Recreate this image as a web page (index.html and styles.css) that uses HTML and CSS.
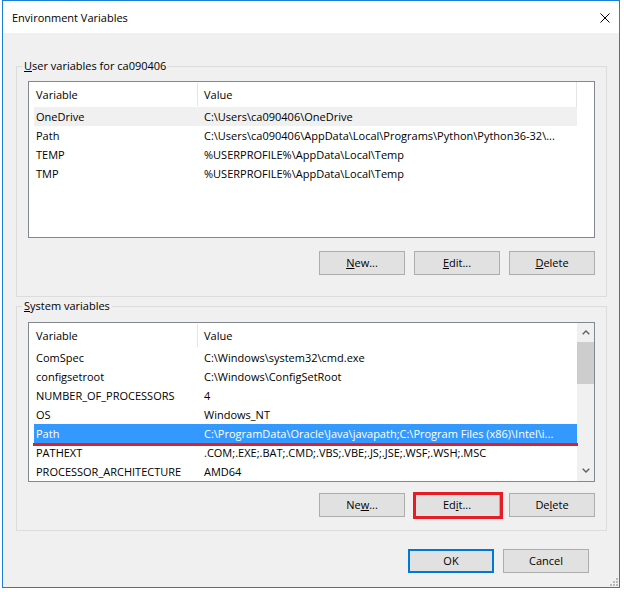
FILE: index.html
```html
<!DOCTYPE html>
<html>
<head>
<meta charset="utf-8">
<title>Environment Variables</title>
<link rel="stylesheet" href="styles.css">
</head>
<body>
<div class="window">
  <div class="titlebar">
    <span class="title">Environment Variables</span>
    <span class="close">
      <svg width="10" height="10" viewBox="0 0 10 10"><path d="M0.5 0.5 L9.5 9.5 M9.5 0.5 L0.5 9.5" stroke="#000" stroke-width="1" fill="none"/></svg>
    </span>
  </div>
  <div class="body">
    <fieldset class="group group-user">
      <legend><u>U</u>ser variables for ca090406</legend>
      <div class="list list-user">
        <div class="list-main">
          <div class="hdr"><div class="c1">Variable</div><div class="c2">Value</div></div>
          <div class="row row-inactive"><div class="c1">OneDrive</div><div class="c2">C:\Users\ca090406\OneDrive</div></div>
          <div class="row"><div class="c1">Path</div><div class="c2">C:\Users\ca090406\AppData\Local\Programs\Python\Python36-32\...</div></div>
          <div class="row"><div class="c1">TEMP</div><div class="c2">%USERPROFILE%\AppData\Local\Temp</div></div>
          <div class="row"><div class="c1">TMP</div><div class="c2">%USERPROFILE%\AppData\Local\Temp</div></div>
        </div>
        <div class="scroll-space"></div>
      </div>
      <div class="btns btns-user">
        <button class="btn"><u>N</u>ew...</button>
        <button class="btn"><u>E</u>dit...</button>
        <button class="btn"><u>D</u>elete</button>
      </div>
    </fieldset>
    <fieldset class="group group-sys">
      <legend><u>S</u>ystem variables</legend>
      <div class="list list-sys">
        <div class="list-main">
          <div class="hdr"><div class="c1">Variable</div><div class="c2">Value</div></div>
          <div class="row"><div class="c1">ComSpec</div><div class="c2">C:\Windows\system32\cmd.exe</div></div>
          <div class="row"><div class="c1">configsetroot</div><div class="c2">C:\Windows\ConfigSetRoot</div></div>
          <div class="row"><div class="c1">NUMBER_OF_PROCESSORS</div><div class="c2">4</div></div>
          <div class="row"><div class="c1">OS</div><div class="c2">Windows_NT</div></div>
          <div class="row row-selected"><div class="c1">Path</div><div class="c2">C:\ProgramData\Oracle\Java\javapath;C:\Program Files (x86)\Intel\i...</div><span class="red-underline"></span></div>
          <div class="row"><div class="c1">PATHEXT</div><div class="c2">.COM;.EXE;.BAT;.CMD;.VBS;.VBE;.JS;.JSE;.WSF;.WSH;.MSC</div></div>
          <div class="row"><div class="c1">PROCESSOR_ARCHITECTURE</div><div class="c2">AMD64</div></div>
        </div>
        <div class="vscroll">
          <div class="arrow arrow-up"><svg width="8" height="5" viewBox="0 0 8 5"><path d="M0.7 4.3 L4 1 L7.3 4.3" stroke="#606060" stroke-width="1.4" fill="none"/></svg></div>
          <div class="thumb"></div>
          <div class="track"></div>
          <div class="arrow arrow-down"><svg width="8" height="5" viewBox="0 0 8 5"><path d="M0.7 0.7 L4 4 L7.3 0.7" stroke="#606060" stroke-width="1.4" fill="none"/></svg></div>
        </div>
      </div>
      <div class="btns btns-sys">
        <button class="btn">Ne<u>w</u>...</button>
        <button class="btn btn-marked">Ed<u>i</u>t...<span class="red-box"></span></button>
        <button class="btn">De<u>l</u>ete</button>
      </div>
    </fieldset>
    <div class="dlg-btns">
      <button class="btn btn-default">OK</button>
      <button class="btn">Cancel</button>
    </div>
  </div>
  <span class="grip">
    <svg width="10" height="10" viewBox="0 0 10 10" fill="#b9b9b9">
      <rect x="8" y="2" width="2" height="2"/>
      <rect x="5" y="5" width="2" height="2"/><rect x="8" y="5" width="2" height="2"/>
      <rect x="2" y="8" width="2" height="2"/><rect x="5" y="8" width="2" height="2"/><rect x="8" y="8" width="2" height="2"/>
    </svg>
  </span>
</div>
</body>
</html>
```
FILE: styles.css
```css
* { box-sizing: border-box; }

body {
  margin: 0;
  background: #ffffff;
  font-family: "Open Sans", "Noto Sans", sans-serif;
  font-size: 11px;
  color: #000;
}

.window {
  position: relative;
  margin-left: 2px;
  width: 618px;
  height: 588px;
  border: 1px solid #1a7fd6;
  background: #f0f0f0;
  display: flex;
  flex-direction: column;
}

.titlebar {
  height: 32px;
  flex: none;
  background: #fff;
  display: flex;
  align-items: center;
  justify-content: space-between;
  padding: 2px 0 0 9px;
}

.title { line-height: 16px; }

.close {
  display: flex;
  width: 10px;
  height: 10px;
  margin-right: 9px;
}

.body {
  flex: 1;
  padding: 25px 12px 0 13px;
}

.group {
  margin: 0;
  min-width: 0;
  border: 1px solid #dcdcdc;
  padding: 7px 11px 21px 11px;
}

.group-sys {
  margin-top: 1px;
  padding-top: 8px;
  padding-bottom: 13px;
}

legend {
  margin-left: -6px;
  padding: 0 2px;
  height: 16px;
  line-height: 16px;
}

.list {
  border: 1px solid #828790;
  background: #fff;
  display: flex;
  overflow: hidden;
}

.list-user { height: 157px; }
.list-sys { height: 160px; }

.list-main {
  flex: 1;
  min-width: 0;
  padding-left: 5px;
}

.scroll-space {
  width: 17px;
  flex: none;
}

.list-user .hdr { border-right: 1px solid #e5e5e5; }

.hdr, .row {
  display: grid;
  grid-template-columns: 164px 1fr;
  white-space: nowrap;
}

.hdr {
  height: 25px;
  line-height: 25px;
}

.hdr .c1 {
  border-right: 1px solid #e5e5e5;
  margin: 1px 0;
  line-height: 23px;
}

.row {
  position: relative;
  height: 19px;
  line-height: 19px;
}

.c1 { padding-left: 2px; overflow: hidden; }
.c2 { padding-left: 6px; overflow: hidden; }

.row-inactive { background: #f0f0f0; }

.row-selected {
  background: #3399ff;
  color: #fff;
}

.red-underline {
  position: absolute;
  left: -1px;
  right: -1px;
  top: 100%;
  height: 3px;
  background: #e81c24;
}

.vscroll {
  width: 17px;
  flex: none;
  background: #f0f0f0;
  display: flex;
  flex-direction: column;
}

.arrow {
  height: 18px;
  flex: none;
  display: flex;
  align-items: center;
  justify-content: center;
}

.arrow-down { height: 22px; }

.thumb {
  height: 42px;
  flex: none;
  margin-top: 1px;
  background: #cdcdcd;
}

.track { flex: 1; }

.btns {
  display: flex;
  justify-content: flex-end;
  gap: 9px;
}

.btns-user { margin-top: 13px; }
.btns-sys { margin-top: 11px; }

.btn {
  position: relative;
  width: 86px;
  height: 24px;
  padding: 0;
  border: 1px solid #adadad;
  background: #e1e1e1;
  font: inherit;
  color: #000;
  line-height: 20px;
}

.btn-default {
  border: 2px solid #0078d7;
}

.red-box {
  position: absolute;
  left: -2px;
  right: -4px;
  top: -2px;
  bottom: -3px;
  border: 3px solid #e81c24;
}

.dlg-btns {
  display: flex;
  justify-content: flex-end;
  gap: 9px;
  margin-top: 18px;
  padding-right: 18px;
}

.grip {
  position: absolute;
  right: 1px;
  bottom: 1px;
  width: 10px;
  height: 10px;
  display: flex;
}
```
